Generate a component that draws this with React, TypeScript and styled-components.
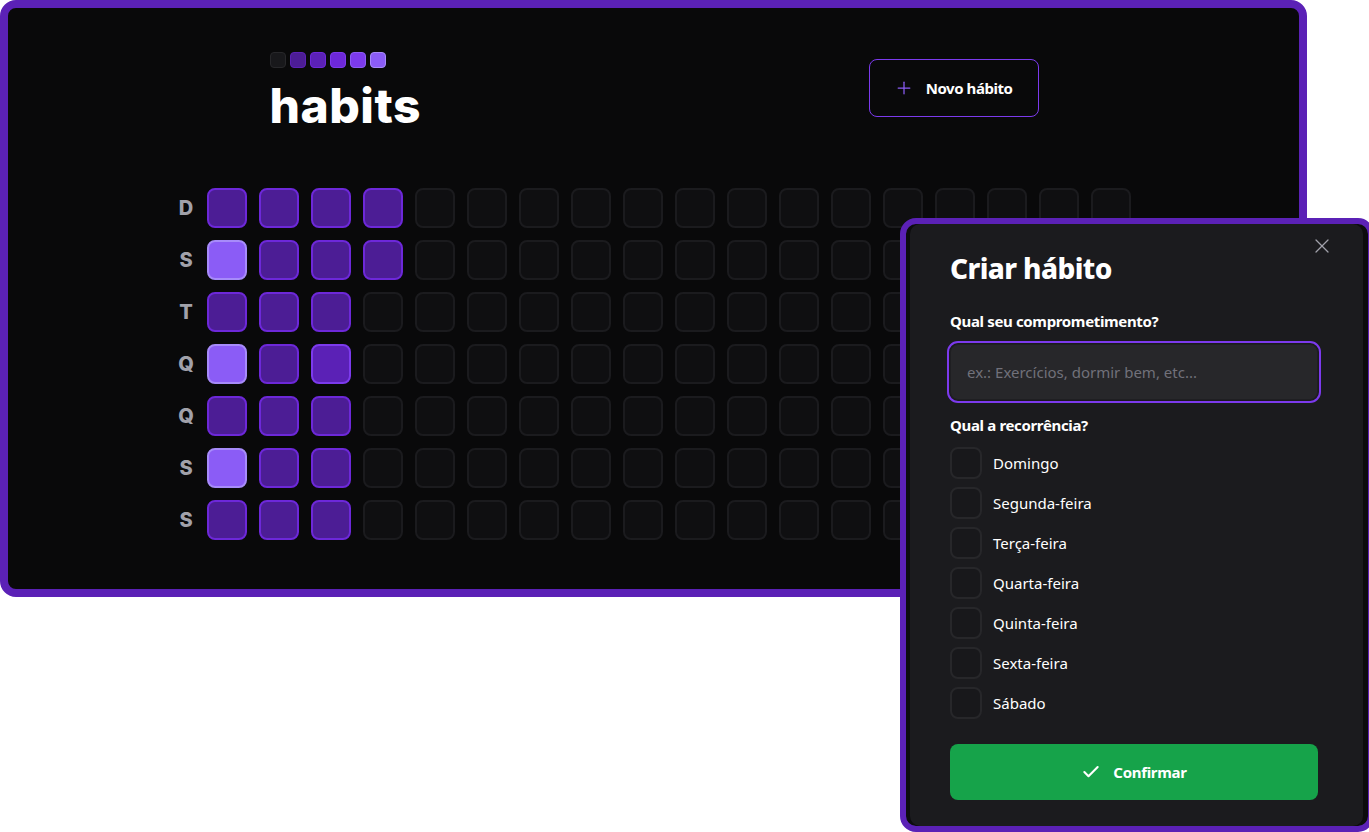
import styled, { createGlobalStyle } from "styled-components";
import { Plus, X, Check } from "lucide-react";

const GlobalStyle = createGlobalStyle`
  * {
    box-sizing: border-box;
  }

  body {
    margin: 0;
    background: #ffffff;
    font-family: "Noto Sans", "Liberation Sans", sans-serif;
    color: #ffffff;
  }
`;

const Stage = styled.div`
  position: relative;
  width: 1369px;
  height: 832px;
  overflow: hidden;
`;

const AppWindow = styled.div`
  width: 1307px;
  height: 597px;
  border: 8px solid #5b21b6;
  border-radius: 16px;
  background: #09090a;
  display: flex;
  flex-direction: column;
  align-items: center;
  padding-top: 44px;
`;

const Header = styled.header`
  width: 768px;
  display: flex;
  justify-content: space-between;
  align-items: flex-start;
`;

const Brand = styled.div`
  display: flex;
  flex-direction: column;
`;

const LogoSquares = styled.div`
  display: flex;
  gap: 4px;
`;

const LogoSquare = styled.span<{ $bg: string; $border: string }>`
  width: 16px;
  height: 16px;
  border-radius: 4px;
  background: ${(p) => p.$bg};
  border: 1px solid ${(p) => p.$border};
`;

const Title = styled.h1`
  margin: 14px 0 0;
  font-family: Inter, "Noto Sans", sans-serif;
  font-size: 48px;
  line-height: 48px;
  font-weight: 800;
  letter-spacing: 0.5px;
  color: #ffffff;
`;

const NewButton = styled.button`
  margin-top: 7px;
  margin-right: -1px;
  height: 58px;
  display: flex;
  align-items: center;
  gap: 12px;
  padding: 0 25px 0 24px;
  border: 1px solid #7c3aed;
  border-radius: 8px;
  background: transparent;
  color: #ffffff;
  font-family: "Noto Sans", sans-serif;
  font-size: 15px;
  font-weight: 700;
  letter-spacing: -0.45px;
  cursor: pointer;

  svg {
    color: #8b5cf6;
  }
`;

const Summary = styled.div`
  margin-top: 58px;
  margin-right: 4px;
  display: flex;
  gap: 7px;
`;

const WeekLabels = styled.div`
  display: grid;
  grid-template-rows: repeat(7, 40px);
  row-gap: 12px;
  width: 28px;
`;

const WeekLabel = styled.span`
  display: flex;
  align-items: center;
  justify-content: center;
  font-family: Inter, "Noto Sans", sans-serif;
  font-size: 20px;
  font-weight: 800;
  color: #a1a1aa;
`;

const DaysGrid = styled.div`
  display: grid;
  grid-template-rows: repeat(7, 40px);
  grid-auto-flow: column;
  grid-auto-columns: 40px;
  gap: 12px;
`;

const dayTones = {
  empty: { bg: "#0f0f11", border: "#1b1b1e" },
  low: { bg: "#4c1d95", border: "#6d28d9" },
  mid: { bg: "#5b21b6", border: "#7c3aed" },
  high: { bg: "#8b5cf6", border: "#a78bfa" },
};

type Tone = keyof typeof dayTones;

const Day = styled.div<{ $tone: Tone }>`
  width: 40px;
  height: 40px;
  border-radius: 8px;
  border: 2px solid ${(p) => dayTones[p.$tone].border};
  background: ${(p) => dayTones[p.$tone].bg};
`;

const Modal = styled.div`
  position: absolute;
  left: 900px;
  top: 218px;
  width: 474px;
  height: 614px;
  border: 6px solid #5b21b6;
  border-radius: 16px;
  background: #1b1b1e;
  box-shadow: inset 4px 0 0 #0c0c0d, inset -5px 0 0 #0c0c0d;
  padding: 26px 50px 0 44px;
  display: flex;
  flex-direction: column;
`;

const CloseButton = styled.button`
  position: absolute;
  top: 10px;
  right: 34px;
  padding: 0;
  border: none;
  background: transparent;
  color: #a1a1aa;
  display: flex;
  cursor: pointer;
`;

const ModalTitle = styled.h2`
  margin: 0;
  font-size: 28px;
  line-height: 36px;
  font-weight: 800;
  letter-spacing: -0.6px;
  color: #ffffff;
`;

const FieldLabel = styled.label<{ $gap: number }>`
  margin-top: ${(p) => p.$gap}px;
  font-size: 15px;
  line-height: 20px;
  font-weight: 700;
  letter-spacing: -0.35px;
  color: #ffffff;
`;

const TextInput = styled.input`
  margin-top: 13px;
  height: 56px;
  width: 100%;
  padding: 0 16px;
  border: 1px solid #1f1f22;
  border-radius: 8px;
  background: #27272a;
  outline: 2px solid #7c3aed;
  outline-offset: 1px;
  color: #ffffff;
  font-family: "Noto Sans", sans-serif;
  font-size: 15px;

  &::placeholder {
    color: #71717a;
  }
`;

const DayList = styled.div`
  margin-top: 12px;
  display: flex;
  flex-direction: column;
  gap: 8px;
`;

const DayOption = styled.label`
  display: flex;
  align-items: center;
  gap: 11px;
  font-size: 15px;
  color: #ffffff;
`;

const CheckBox = styled.span`
  width: 32px;
  height: 32px;
  border-radius: 8px;
  border: 2px solid #27272a;
  background: #18181b;
`;

const ConfirmButton = styled.button`
  margin-top: 25px;
  height: 56px;
  width: 100%;
  display: flex;
  align-items: center;
  justify-content: center;
  gap: 12px;
  border: none;
  border-radius: 8px;
  background: #16a34a;
  color: #ffffff;
  font-family: "Noto Sans", sans-serif;
  font-size: 15px;
  font-weight: 700;
  letter-spacing: -0.3px;
  cursor: pointer;
`;

const logoColors = [
  ["#18181b", "#27272a"],
  ["#4c1d95", "#5b21b6"],
  ["#5b21b6", "#6d28d9"],
  ["#6d28d9", "#7c3aed"],
  ["#7c3aed", "#8b5cf6"],
  ["#8b5cf6", "#a78bfa"],
];

const weekDays = ["D", "S", "T", "Q", "Q", "S", "S"];

// filled days per row, from the first column
const filled: Tone[][] = [
  ["low", "low", "low", "low"],
  ["high", "low", "low", "low"],
  ["low", "low", "low"],
  ["high", "low", "mid"],
  ["low", "low", "low"],
  ["high", "low", "low"],
  ["low", "low", "low"],
];

const recurrence = [
  "Domingo",
  "Segunda-feira",
  "Terça-feira",
  "Quarta-feira",
  "Quinta-feira",
  "Sexta-feira",
  "Sábado",
];

const COLUMNS = 18;

export default function App() {
  const days: { key: string; tone: Tone }[] = [];
  for (let col = 0; col < COLUMNS; col++) {
    for (let row = 0; row < 7; row++) {
      days.push({ key: `${col}-${row}`, tone: filled[row][col] ?? "empty" });
    }
  }

  return (
    <>
      <GlobalStyle />
      <Stage>
        <AppWindow>
          <Header>
            <Brand>
              <LogoSquares>
                {logoColors.map(([bg, border]) => (
                  <LogoSquare key={bg} $bg={bg} $border={border} />
                ))}
              </LogoSquares>
              <Title>habits</Title>
            </Brand>
            <NewButton>
              <Plus size={20} strokeWidth={1.5} />
              Novo hábito
            </NewButton>
          </Header>

          <Summary>
            <WeekLabels>
              {weekDays.map((d, i) => (
                <WeekLabel key={i}>{d}</WeekLabel>
              ))}
            </WeekLabels>
            <DaysGrid>
              {days.map((d) => (
                <Day key={d.key} $tone={d.tone} />
              ))}
            </DaysGrid>
          </Summary>
        </AppWindow>

        <Modal>
          <CloseButton aria-label="Fechar">
            <X size={24} strokeWidth={1.25} />
          </CloseButton>
          <ModalTitle>Criar hábito</ModalTitle>

          <FieldLabel $gap={25} htmlFor="title">
            Qual seu comprometimento?
          </FieldLabel>
          <TextInput id="title" placeholder="ex.: Exercícios, dormir bem, etc..." />

          <FieldLabel $gap={15}>Qual a recorrência?</FieldLabel>
          <DayList>
            {recurrence.map((day) => (
              <DayOption key={day}>
                <CheckBox />
                {day}
              </DayOption>
            ))}
          </DayList>

          <ConfirmButton>
            <Check size={20} strokeWidth={2.5} />
            Confirmar
          </ConfirmButton>
        </Modal>
      </Stage>
    </>
  );
}
